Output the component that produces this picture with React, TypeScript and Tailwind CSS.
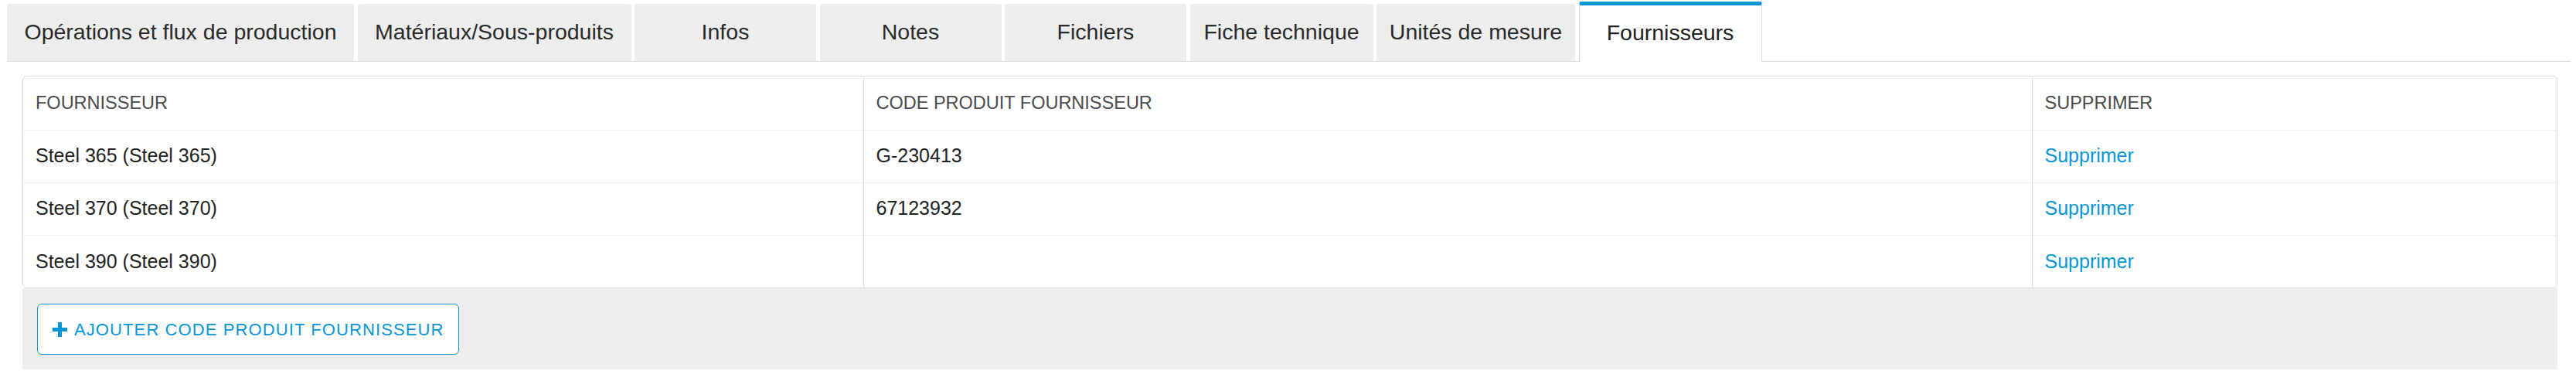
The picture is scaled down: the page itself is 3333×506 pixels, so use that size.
import React from "react";

const tabs = [
  { label: "Opérations et flux de production", width: "w-[449px]" },
  { label: "Matériaux/Sous-produits", width: "w-[354px]" },
  { label: "Infos", width: "w-[235px]" },
  { label: "Notes", width: "w-[235px]" },
  { label: "Fichiers", width: "w-[235px]" },
  { label: "Fiche technique", width: "w-[237px]" },
  { label: "Unités de mesure", width: "w-[257px]" },
  { label: "Fournisseurs", width: "w-[237px]", active: true },
];

const rows = [
  { supplier: "Steel 365 (Steel 365)", code: "G-230413" },
  { supplier: "Steel 370 (Steel 370)", code: "67123932" },
  { supplier: "Steel 390 (Steel 390)", code: "" },
];

function PlusIcon() {
  return (
    <svg width="19" height="19" viewBox="0 0 19 19" className="shrink-0">
      <path d="M7 0h5v7h7v5h-7v7H7v-7H0V7h7z" fill="#0696d7" />
    </svg>
  );
}

export default function App() {
  return (
    <div className="min-h-screen bg-white pl-[9px] pr-[7px] font-['Liberation_Sans',Arial,sans-serif] text-[#3c3c3c]">
      {/* Tabs */}
      <div className="flex h-[80px] items-end gap-[4.5px] border-b border-[#dcdcdc]">
        {tabs.map((tab) =>
          tab.active ? (
            <div
              key={tab.label}
              className={`${tab.width} mb-[-1px] flex h-[78px] shrink-0 items-center justify-center rounded-t-[3px] border-x border-t-[5px] border-x-[#dcdcdc] border-t-[#0696d7] bg-white pb-[2px] text-[28.5px] text-[#222]`}
            >
              {tab.label}
            </div>
          ) : (
            <div
              key={tab.label}
              className={`${tab.width} flex h-[74px] shrink-0 items-center justify-center rounded-t-[3px] bg-[#ededed] pb-[1px] text-[28.5px] text-[#2a2a2a]`}
            >
              {tab.label}
            </div>
          )
        )}
      </div>

      {/* Content */}
      <div className="ml-[20px] mr-[17px] mt-[18px]">
        <div className="overflow-hidden rounded-[6px] border border-[#dcdcdc] bg-white">
          <table className="w-full table-fixed border-collapse">
            <colgroup>
              <col className="w-[1087px]" />
              <col className="w-[1512px]" />
              <col />
            </colgroup>
            <thead>
              <tr className="h-[69px] border-b border-[#f2f2f2] text-left text-[23.5px] text-[#4a4a4a]">
                <th className="border-r border-[#dedede] pl-[16px] font-normal">FOURNISSEUR</th>
                <th className="border-r border-[#dedede] pl-[16px] font-normal">CODE PRODUIT FOURNISSEUR</th>
                <th className="pl-[16px] font-normal">SUPPRIMER</th>
              </tr>
            </thead>
            <tbody>
              {rows.map((row, i) => (
                <tr
                  key={row.supplier}
                  className={`h-[68px] text-[25px] text-[#222] ${i < rows.length - 1 ? "border-b border-[#f2f2f2]" : ""}`}
                >
                  <td className="border-r border-[#dedede] pl-[16px]">{row.supplier}</td>
                  <td className="border-r border-[#dedede] pl-[16px]">{row.code}</td>
                  <td className="pl-[16px]">
                    <a href="#" className="text-[#0696d7]">
                      Supprimer
                    </a>
                  </td>
                </tr>
              ))}
            </tbody>
          </table>
        </div>

        <div className="flex h-[105px] items-start bg-[#ededed] pl-[19px] pt-[20px]">
          <button className="flex h-[66px] w-[546px] items-center gap-[9px] rounded-[6px] border border-[#0696d7] bg-white pl-[19px] text-[22px] tracking-[1.1px] text-[#0696d7]">
            <PlusIcon />
            <span>AJOUTER CODE PRODUIT FOURNISSEUR</span>
          </button>
        </div>
      </div>
    </div>
  );
}
